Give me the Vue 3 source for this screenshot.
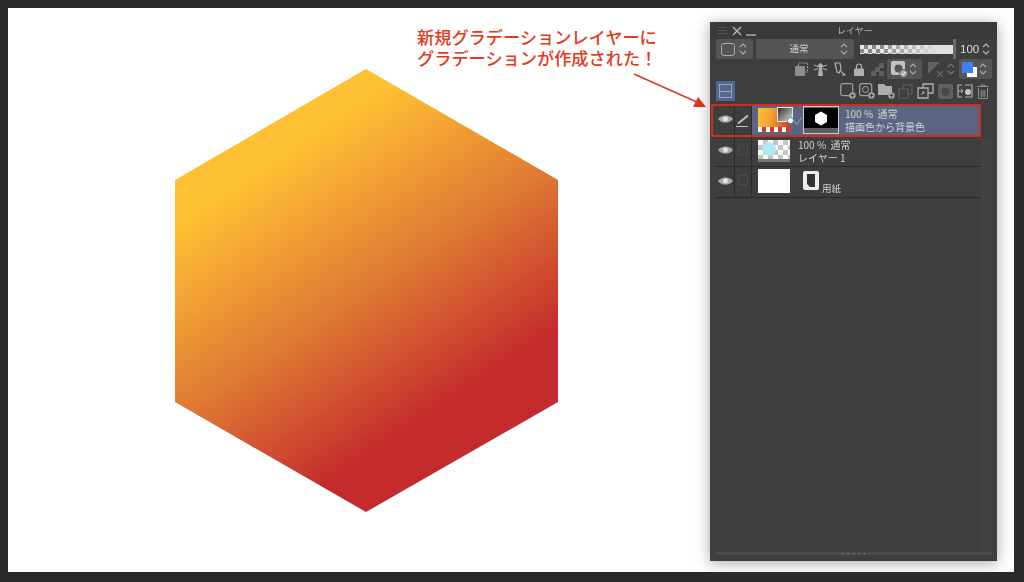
<script setup>
const layers = [
  { id: 2, kind: 'raster', opacity: '100 %\u00a0\u00a0通常', name: 'レイヤー 1' },
  { id: 3, kind: 'paper', name: '用紙' },
]
</script>

<template>
  <div class="frame">
    <main class="canvas">
      <svg class="hexagon" width="384" height="444" viewBox="0 0 384 444">
        <defs>
          <linearGradient id="hexFill" gradientUnits="userSpaceOnUse" x1="72" y1="108" x2="240" y2="359">
            <stop offset="0" stop-color="#ffc133" />
            <stop offset="0.53" stop-color="#df7a33" />
            <stop offset="1" stop-color="#c32b2c" />
          </linearGradient>
        </defs>
        <polygon points="191,0 383,111 383,333 191,443 0,333 0,111" fill="url(#hexFill)" />
      </svg>

      <p class="note">新規グラデーションレイヤーに<br />グラデーションが作成された！</p>
      <svg class="arrow" width="80" height="40" viewBox="0 0 80 40">
        <line x1="1" y1="1" x2="66" y2="30" stroke="#d93a24" stroke-width="1.6" />
        <polygon points="73,34 60,34 65,24" fill="#e0381c" />
      </svg>

      <section class="panel">
        <header class="titlebar">
          <div class="window-controls">
            <svg width="11" height="9" viewBox="0 0 11 9"><path d="M1 1.500h9M1 4.500h9M1 7.500h9" stroke="#555" /></svg>
            <svg width="10" height="10" viewBox="0 0 10 10"><path d="M1 1l8 8M9 1l-8 8" stroke="#bbb" stroke-width="1.300" /></svg>
            <svg width="10" height="10" viewBox="0 0 10 10"><path d="M0 9h10" stroke="#bbb" stroke-width="1.300" /></svg>
          </div>
          <span class="title">レイヤー</span>
        </header>

        <div class="row-one">
          <div class="combo combo-shape">
            <span class="rounded-square"></span>
            <svg class="updown" width="8" height="14" viewBox="0 0 8 14"><path d="M1 5l3-3 3 3M1 9l3 3 3-3" fill="none" stroke="#aaa" stroke-width="1.100" /></svg>
          </div>
          <div class="combo combo-blend">
            <span class="blend-label">通常</span>
            <svg class="updown blend-arrows" width="8" height="14" viewBox="0 0 8 14"><path d="M1 5l3-3 3 3M1 9l3 3 3-3" fill="none" stroke="#aaa" stroke-width="1.100" /></svg>
          </div>
          <div class="opacity-bar"></div>
          <span class="opacity-handle"></span>
          <span class="opacity-value">100</span>
          <svg width="8" height="14" viewBox="0 0 8 14"><path d="M1 5l3-3 3 3M1 9l3 3 3-3" fill="none" stroke="#bbb" stroke-width="1.100" /></svg>
        </div>

        <div class="row-two">
          <svg width="15" height="15" viewBox="0 0 15 15"><rect x="4.500" y="1" width="9" height="9" fill="none" stroke="#999" stroke-dasharray="2 1" /><rect x="1" y="4" width="10" height="10" rx="1" fill="#8d8d8d" /></svg>
          <svg width="13" height="15" viewBox="0 0 13 15"><path d="M0 3l4 1.500M13 3L9 4.500M0 8l4-1.500M13 8L9 6.500" stroke="#b0b0b0" /><path d="M4 3l2.500-2L9 3v2H4zM5 5h3l1 9H4z" fill="#b0b0b0" /></svg>
          <svg width="13" height="15" viewBox="0 0 13 15"><path d="M1 1h5l1 6-2 4-2-1z" fill="none" stroke="#b0b0b0" stroke-width="1.200" /><path d="M6 9c2 0 2 3 5 3M8 13h4" fill="none" stroke="#b0b0b0" stroke-width="1.200" /></svg>
          <svg width="10" height="13" viewBox="0 0 10 13"><path d="M2.500 6V3.500a2.500 2.500 0 0 1 5 0V6" fill="none" stroke="#b0b0b0" stroke-width="1.200" /><rect y="5.500" width="10" height="7.500" rx="1" fill="#b0b0b0" /></svg>
          <svg class="dim-icon" width="13" height="13" viewBox="0 0 13 13"><path d="M0 8h5v5H0zM8 8h5v5H8zM4 4h5v5H4zM8 0h5v5H8z" fill="#5f5f5f" /></svg>
          <div class="combo combo-mask">
            <svg width="17" height="17" viewBox="0 0 17 17"><rect width="14" height="14" rx="2" fill="#c4c4c4" /><circle cx="7.500" cy="7.500" r="4" fill="#555" /><circle cx="12.500" cy="12.500" r="4" fill="#aaa" stroke="#555" /><path d="M10.500 12.500l1.500 1.500 2.500-3" fill="none" stroke="#fff" /></svg>
            <svg width="8" height="14" viewBox="0 0 8 14"><path d="M1 5l3-3 3 3M1 9l3 3 3-3" fill="none" stroke="#aaa" stroke-width="1.100" /></svg>
          </div>
          <div class="ruler-group">
            <svg width="17" height="17" viewBox="0 0 17 17"><path d="M1 1h12L1 13z" fill="#626262" /><path d="M10 10l6 6M16 10l-6 6" stroke="#626262" stroke-width="1.300" /></svg>
            <svg width="8" height="14" viewBox="0 0 8 14"><path d="M1 5l3-3 3 3M1 9l3 3 3-3" fill="none" stroke="#777" stroke-width="1.100" /></svg>
          </div>
          <div class="combo combo-color">
            <svg width="17" height="17" viewBox="0 0 17 17"><rect x="6" y="6" width="10" height="10" fill="#fff" /><rect x="1" y="1" width="11" height="11" fill="#3b82ee" /></svg>
            <svg width="8" height="14" viewBox="0 0 8 14"><path d="M1 5l3-3 3 3M1 9l3 3 3-3" fill="none" stroke="#aaa" stroke-width="1.100" /></svg>
          </div>
        </div>

        <div class="row-three">
          <button class="split-view" aria-label="分割表示"><span></span></button>
          <div class="layer-tools">
            <svg width="16" height="16" viewBox="0 0 16 16"><rect x="0.700" y="0.700" width="12" height="12" rx="2" fill="none" stroke="#a0a0a0" stroke-width="1.200" /><circle cx="12.500" cy="12.500" r="3.300" fill="#a0a0a0" /><path d="M10.800 12.500h3.400M12.500 10.800v3.400" stroke="#444" /></svg>
            <svg width="16" height="16" viewBox="0 0 16 16"><rect x="0.700" y="0.700" width="12" height="12" rx="2" fill="none" stroke="#a0a0a0" stroke-width="1.200" /><circle cx="6.500" cy="6.500" r="3" fill="none" stroke="#a0a0a0" /><circle cx="12.500" cy="12.500" r="3.300" fill="#a0a0a0" /><path d="M10.800 12.500h3.400M12.500 10.800v3.400" stroke="#444" /></svg>
            <svg width="17" height="16" viewBox="0 0 17 16"><path d="M0 1h6l2 2h6v9H0z" fill="#adadad" /><circle cx="13.500" cy="12.500" r="3.300" fill="#a0a0a0" /><path d="M11.800 12.500h3.400M13.500 10.800v3.400" stroke="#444" /></svg>
            <svg width="15" height="15" viewBox="0 0 15 15"><path d="M5 5V1h9v9h-4M1 5h9v9H1z" fill="none" stroke="#5f5f5f" stroke-width="1.200" /></svg>
            <svg width="17" height="16" viewBox="0 0 17 16"><path d="M6 5V1h10v9h-5M1 5h10v10H1z" fill="none" stroke="#b0b0b0" stroke-width="1.300" /><path d="M4 12l3-3M5 9h2v2" fill="none" stroke="#b0b0b0" /></svg>
            <svg width="15" height="15" viewBox="0 0 15 15"><rect width="15" height="15" rx="2" fill="#5f5f5f" /><circle cx="7.500" cy="7.500" r="4" fill="#484848" /></svg>
            <svg width="16" height="14" viewBox="0 0 16 14"><path d="M5 1H1v12h4M8 1h7v12H8" fill="none" stroke="#b0b0b0" stroke-width="1.200" /><circle cx="11" cy="8" r="3" fill="#c4c4c4" /><path d="M1 7h5M4 5l2 2-2 2" fill="none" stroke="#b0b0b0" /></svg>
            <svg width="12" height="15" viewBox="0 0 12 15"><path d="M0 2.500h12M4 2.500V1h4v1.500M1.500 4v10.500h9V4M4.200 6v7M6 6v7M7.800 6v7" fill="none" stroke="#8d8d8d" /></svg>
          </div>
        </div>

        <div class="panel-body">
          <div class="layer-list">
            <article class="layer layer-active">
              <div class="eye-cell">
                <svg width="15" height="10" viewBox="0 0 14 9"><path d="M0 4.500C3 0 11 0 14 4.500 11 9 3 9 0 4.500z" fill="#a9a9a9" /><circle cx="7" cy="4.500" r="2.300" fill="#e5e5e5" /></svg>
              </div>
              <div class="lock-cell">
                <svg width="14" height="13" viewBox="0 0 14 13"><path d="M2 9.500L12 1.500" fill="none" stroke="#c4c4c4" stroke-width="2" /><path d="M0 12.500h12" fill="none" stroke="#c4c4c4" /></svg>
              </div>
              <div class="layer-content active-content">
                <div class="thumb-stack">
                  <div class="thumb gradient-thumb"></div>
                  <div class="gradient-chip"></div>
                  <span class="chip-dot"></span>
                </div>
                <svg class="link-check" width="10" height="9" viewBox="0 0 10 9"><path d="M1 5l3 3 5-7" fill="none" stroke="#8d97b3" stroke-width="1.200" /></svg>
                <div class="mask-thumb">
                  <svg width="34" height="20" viewBox="0 0 34 20"><rect width="34" height="20" fill="#000" /><polygon points="17,3.500 23,7 23,14 17,17.500 11,14 11,7" fill="#fff" /></svg>
                </div>
                <div class="layer-text">
                  <span>100 %&nbsp;&nbsp;通常</span>
                  <span>描画色から背景色</span>
                </div>
              </div>
            </article>

            <article v-for="layer in layers" :key="layer.id" class="layer" :class="`layer-${layer.kind}`">
              <div class="eye-cell">
                <svg width="15" height="10" viewBox="0 0 14 9"><path d="M0 4.500C3 0 11 0 14 4.500 11 9 3 9 0 4.500z" fill="#a9a9a9" /><circle cx="7" cy="4.500" r="2.300" fill="#e5e5e5" /></svg>
              </div>
              <div class="lock-cell"><span class="checkbox"></span></div>
              <div class="layer-content">
                <template v-if="layer.kind === 'raster'">
                  <div class="thumb checker-thumb"><span class="blue-dot"></span></div>
                  <div class="layer-text">
                    <span>{{ layer.opacity }}</span>
                    <span>{{ layer.name }}</span>
                  </div>
                </template>
                <template v-else>
                  <div class="thumb paper-thumb"></div>
                  <svg class="paper-icon" width="16" height="19" viewBox="0 0 16 19"><rect width="16" height="19" rx="2" fill="#eee" /><path d="M4 3h8v13H7l-3-3z" fill="#333" /></svg>
                  <span class="paper-name">{{ layer.name }}</span>
                </template>
              </div>
            </article>
          </div>
          <div class="scroll-track"></div>
          <span class="active-outline"></span>
        </div>

        <footer class="grip-bar"><span class="grip">·····</span></footer>
      </section>
    </main>
  </div>
</template>

<style scoped>
.frame {
  box-sizing: border-box;
  width: 1024px;
  height: 582px;
  padding: 8px 10px 10px 8px;
  background: #2b2b2b;
  font-family: "Noto Sans CJK JP", "Liberation Sans", sans-serif;
}
.canvas {
  position: relative;
  width: 100%;
  height: 100%;
  background: #fff;
  overflow: hidden;
}
.hexagon {
  position: absolute;
  left: 167px;
  top: 61px;
}
.note {
  position: absolute;
  left: 409px;
  top: 18px;
  margin: 0;
  font-size: 17.200px;
  line-height: 21px;
  font-weight: 500;
  color: #e23a20;
  white-space: nowrap;
}
.arrow {
  position: absolute;
  left: 625px;
  top: 65px;
}
.panel {
  position: absolute;
  left: 702px;
  top: 14px;
  box-sizing: border-box;
  width: 287px;
  height: 539px;
  padding: 0 5px 0 6px;
  display: flex;
  flex-direction: column;
  background: #3e3e3e;
  box-shadow: 0 2px 14px rgba(0, 0, 0, 0.35);
  color: #d0d0d0;
  filter: blur(0.5px);
}
.titlebar {
  position: relative;
  height: 17px;
  flex: none;
  display: flex;
  align-items: center;
  margin: 0 -5px 0 -6px;
  padding-left: 7px;
  background: #3a3a3a;
}
.window-controls {
  display: flex;
  align-items: center;
  gap: 4px;
}
.title {
  position: absolute;
  left: 127px;
  top: 1px;
  font-size: 9px;
  line-height: 15px;
  color: #b5b5b5;
}
.row-one {
  height: 20px;
  flex: none;
  display: flex;
  align-items: center;
}
.combo {
  box-sizing: border-box;
  height: 20px;
  display: flex;
  align-items: center;
  justify-content: space-between;
  background: #555;
  border-radius: 2px;
}
.combo-shape {
  width: 37px;
  padding: 0 6px 0 5px;
}
.rounded-square {
  box-sizing: border-box;
  width: 14px;
  height: 13px;
  border: 1px solid #a8a8a8;
  border-radius: 3px;
}
.combo-blend {
  position: relative;
  justify-content: center;
  width: 98px;
  margin-left: 3px;
  padding-right: 12px;
}
.blend-arrows {
  position: absolute;
  right: 6px;
  top: 3px;
}
.blend-label {
  font-size: 9.500px;
  line-height: 18px;
  padding-bottom: 2px;
  color: #cfcfcf;
}
.opacity-bar {
  width: 93px;
  height: 9px;
  margin-left: 6px;
  background-color: #e8e8e8;
  background-image:
    linear-gradient(90deg, rgba(224, 224, 224, 0) 20%, #e0e0e0 85%),
    repeating-conic-gradient(#8a8a8a 0 25%, #e6e6e6 0 50%);
  background-size: 100% 100%, 8px 8px;
}
.opacity-handle {
  width: 3px;
  height: 20px;
  background: #6a6a6a;
}
.opacity-value {
  width: 22px;
  margin-left: 4px;
  font-family: "Liberation Sans", sans-serif;
  font-size: 11.500px;
  color: #dcdcdc;
}
.row-two {
  height: 20px;
  flex: none;
  display: flex;
  align-items: center;
  padding-left: 78px;
}
.row-two > svg:nth-child(1) { margin-right: 5px; }
.row-two > svg:nth-child(2) { margin-right: 7px; }
.row-two > svg:nth-child(3) { margin-right: 7px; }
.row-two > svg:nth-child(4) { margin-right: 7px; }
.row-two > svg:nth-child(5) { margin-right: 3px; }
.combo-mask {
  width: 35px;
  padding: 0 5px 0 4px;
}
.ruler-group {
  width: 28px;
  margin: 0 4px 0 5px;
  display: flex;
  align-items: center;
  justify-content: space-between;
}
.combo-color {
  width: 33px;
  padding: 0 5px 0 2px;
}
.row-three {
  height: 20px;
  margin-top: 2px;
  flex: none;
  display: flex;
  align-items: center;
  justify-content: space-between;
}
.split-view {
  box-sizing: border-box;
  width: 19px;
  height: 20px;
  padding: 3px 3px;
  border: 0;
  background: #52678f;
}
.split-view span {
  display: block;
  box-sizing: border-box;
  height: 14px;
  border: 1px solid #9aa6be;
  background: linear-gradient(#9aa6be, #9aa6be) center / 100% 1px no-repeat;
}
.layer-tools {
  display: flex;
  align-items: center;
  gap: 3px;
  padding-right: 3px;
}
.layer-tools svg:nth-child(5),
.layer-tools svg:nth-child(6),
.layer-tools svg:nth-child(7),
.layer-tools svg:nth-child(8) {
  margin-left: 1px;
}
.panel-body {
  position: relative;
  flex: 1;
  display: flex;
  margin-top: 3px;
}
.layer-list {
  flex: 1;
}
.scroll-track {
  width: 11px;
  margin-top: 35px;
  background: #424242;
}
.layer {
  box-sizing: border-box;
  display: flex;
  border-bottom: 1px solid #2a2a2a;
}
.layer-active {
  height: 33px;
}
.layer-raster {
  height: 30px;
}
.layer-paper {
  height: 31px;
}
.eye-cell {
  width: 18px;
  flex: none;
  display: flex;
  align-items: center;
  justify-content: center;
  padding-bottom: 3px;
  box-sizing: border-box;
}
.lock-cell {
  width: 18px;
  flex: none;
  display: flex;
  align-items: center;
  justify-content: center;
  border-left: 1px solid #2a2a2a;
  border-right: 1px solid #2a2a2a;
  box-sizing: border-box;
}
.checkbox {
  box-sizing: border-box;
  width: 10px;
  height: 10px;
  border: 1px solid #4b4b4b;
  border-radius: 1px;
  margin-bottom: 4px;
}
.layer-content {
  position: relative;
  flex: 1;
  display: flex;
  align-items: center;
  padding-left: 6px;
}
.active-content {
  background: #5b6582;
}
.thumb {
  box-sizing: border-box;
  width: 32px;
  flex: none;
}
.thumb-stack {
  position: relative;
  width: 32px;
  height: 24px;
  flex: none;
}
.gradient-thumb {
  height: 24px;
  background:
    repeating-linear-gradient(90deg, #fff 0 4px, #d83a2a 4px 8px) 0 100% / 100% 5px no-repeat,
    linear-gradient(100deg, #fcbf2f 0%, #f3a232 40%, #cc3329 100%);
}
.gradient-chip {
  position: absolute;
  left: 19px;
  top: -1px;
  box-sizing: border-box;
  width: 16px;
  height: 15px;
  border: 1px solid #e5e5e5;
  background: linear-gradient(135deg, #2f2f2f, #d8d8d8);
}
.chip-dot {
  position: absolute;
  left: 29px;
  top: 9px;
  box-sizing: border-box;
  width: 7px;
  height: 7px;
  border-radius: 50%;
  border: 1.500px solid #3c8f83;
  background: #fff;
}
.link-check {
  margin-left: 3px;
}
.mask-thumb {
  box-sizing: border-box;
  width: 36px;
  height: 28px;
  padding-top: 1px;
  border: 1px solid #c6cad6;
  background: #5f5f5f;
}
.mask-thumb svg {
  display: block;
}
.layer-text {
  display: flex;
  flex-direction: column;
  margin-left: 6px;
  font-size: 10px;
  line-height: 13px;
  color: #d0d0d0;
  white-space: nowrap;
}
.checker-thumb {
  position: relative;
  height: 22px;
  margin-bottom: 2px;
  border-bottom: 3px solid #777;
  background: repeating-conic-gradient(#c4c4c4 0 25%, #fff 0 50%) 0 0 / 10px 10px;
  overflow: hidden;
}
.blue-dot {
  position: absolute;
  left: 4px;
  top: 2px;
  width: 14px;
  height: 14px;
  border-radius: 50%;
  background: #b2eaf3;
}
.layer-raster .layer-text {
  margin-left: 8px;
  margin-bottom: 2px;
}
.paper-thumb {
  height: 24px;
  margin-bottom: 2px;
  background: #fff;
}
.paper-icon {
  margin: 0 0 4px 13px;
}
.paper-name {
  margin: 13px 0 0 3px;
  font-size: 9.500px;
  line-height: 13px;
  color: #cfcfcf;
}
.active-outline {
  position: absolute;
  left: -5px;
  top: 0;
  width: 270px;
  height: 33px;
  box-sizing: border-box;
  border: 2.500px solid #c9301e;
  pointer-events: none;
}
.grip-bar {
  position: relative;
  flex: none;
  height: 3px;
  margin-bottom: 6px;
  background: #4b4b4b;
  display: flex;
  justify-content: center;
}
.grip {
  font-size: 9px;
  line-height: 3px;
  letter-spacing: 0.500px;
  color: #999;
}
</style>
